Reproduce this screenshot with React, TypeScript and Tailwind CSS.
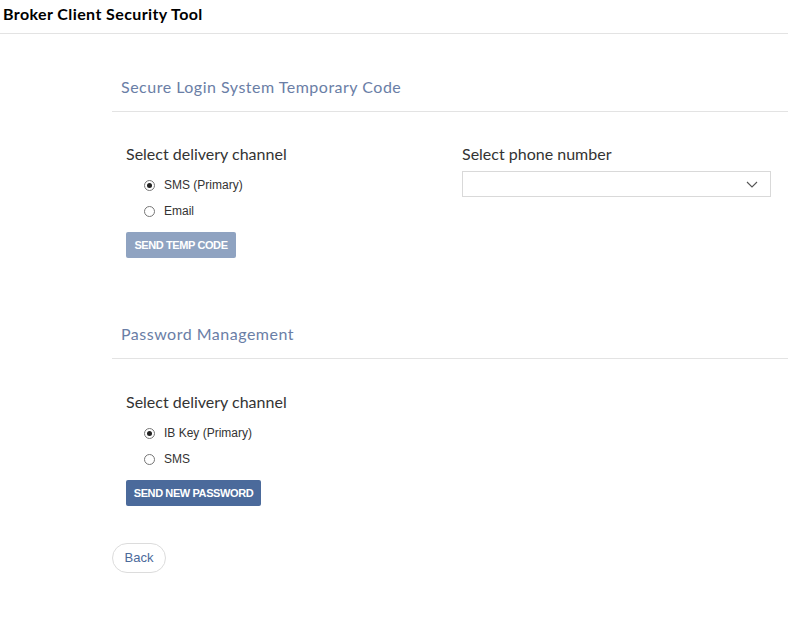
const sans = { fontFamily: "Lato, 'Open Sans', sans-serif" };

function Radio({ label, checked }: { label: string; checked?: boolean }) {
  return (
    <label className="flex items-center h-[26px] pl-[18px] gap-[9px] text-[12px] text-[#333] font-['Liberation_Sans',Arial,sans-serif]">
      <span className="w-[11px] h-[11px] rounded-full border border-[#767676] bg-white flex items-center justify-center">
        {checked && <span className="w-[5px] h-[5px] rounded-full bg-[#222]" />}
      </span>
      {label}
    </label>
  );
}

function SectionTitle({ children, mt }: { children: string; mt: string }) {
  return (
    <div className={`${mt} border-b border-[#e3e3e3] pl-[9px] pb-[12px]`}>
      <h2 className="text-[16px] leading-[24px] text-[#6a7ea6] tracking-[0.5px]" style={sans}>
        {children}
      </h2>
    </div>
  );
}

export default function App() {
  return (
    <div className="w-[788px] h-[618px] bg-white overflow-hidden">
      <header className="h-[34px] border-b border-[#e3e3e3] px-[3px] pt-[2px]">
        <span className="text-[16px] font-bold text-black tracking-[0.4px]" style={sans}>
          Broker Client Security Tool
        </span>
      </header>

      <main className="pl-[112px]">
        <SectionTitle mt="mt-[41px]">Secure Login System Temporary Code</SectionTitle>

        <div className="flex pt-[31px] pl-[14px]">
          <div className="w-[336px]">
            <div className="text-[16px] leading-[22px] text-[#333]" style={sans}>
              Select delivery channel
            </div>
            <div className="mt-[7px]">
              <Radio label="SMS (Primary)" checked />
              <Radio label="Email" />
            </div>
            <button className="mt-[8px] h-[26px] w-[110px] rounded-[2px] bg-[#8fa3c1] text-white text-[11px] font-bold font-['Liberation_Sans',Arial,sans-serif] tracking-[-0.4px]">
              SEND TEMP CODE
            </button>
          </div>
          <div className="w-[309px]">
            <div className="text-[16px] leading-[22px] text-[#333]" style={sans}>
              Select phone number
            </div>
            <div className="mt-[6px] h-[26px] border border-[#d9d9d9] bg-white flex items-center justify-end pr-[12px]">
              <svg width="12" height="7" viewBox="0 0 12 7" fill="none">
                <path d="M1 1l5 5 5-5" stroke="#555" strokeWidth="1.1" />
              </svg>
            </div>
          </div>
        </div>

        <SectionTitle mt="mt-[64px]">Password Management</SectionTitle>

        <div className="pt-[32px] pl-[14px]">
          <div className="text-[16px] leading-[22px] text-[#333]" style={sans}>
            Select delivery channel
          </div>
          <div className="mt-[7px]">
            <Radio label="IB Key (Primary)" checked />
            <Radio label="SMS" />
          </div>
          <button className="mt-[8px] h-[26px] w-[135px] rounded-[2px] bg-[#4b6a9b] text-white text-[11px] font-bold font-['Liberation_Sans',Arial,sans-serif] tracking-[-0.4px]">
            SEND NEW PASSWORD
          </button>
        </div>

        <button className="mt-[37px] h-[30px] w-[54px] rounded-full border border-[#dcdcdc] bg-white text-[13px] text-[#4b6a9b] font-['Liberation_Sans',Arial,sans-serif]">
          Back
        </button>
      </main>
    </div>
  );
}
